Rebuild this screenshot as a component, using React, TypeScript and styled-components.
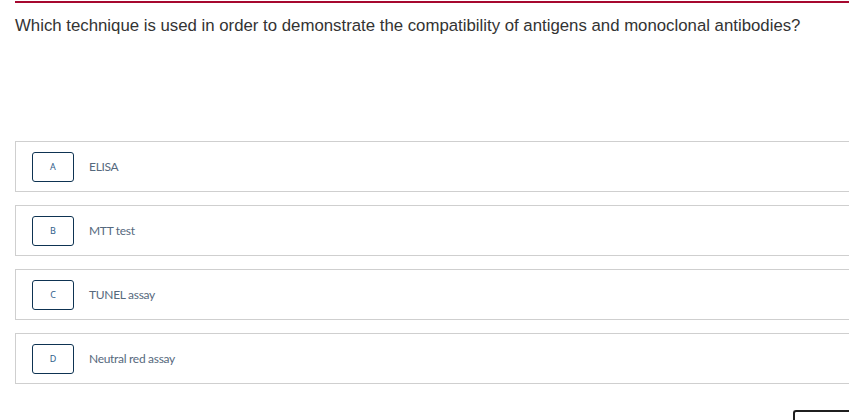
import React from "react"
import styled, { createGlobalStyle } from "styled-components"

const GlobalStyle = createGlobalStyle`
    html, body {
        margin: 0;
        padding: 0;
        background: #fff;
        overflow: hidden;
    }
`

const Page = styled.div`
    padding-left: 15px;
    width: 860px;
`

const TopRule = styled.div`
    height: 2px;
    margin-top: 1px;
    background: #a6082f;
`

const Question = styled.h1`
    margin: 13px 0 0 0;
    font-family: Arial, "Liberation Sans", sans-serif;
    font-size: 16.8px;
    font-weight: normal;
    line-height: 20px;
    color: #333;
`

const Options = styled.div`
    margin-top: 105px;
    display: flex;
    flex-direction: column;
    gap: 13px;
`

const OptionCard = styled.div`
    box-sizing: border-box;
    height: 51px;
    border: 1px solid #cfcfcf;
    border-right: none;
    display: flex;
    align-items: center;
    padding-left: 16px;
    gap: 15px;
    cursor: pointer;
`

const LetterBox = styled.div`
    box-sizing: border-box;
    width: 42px;
    height: 30px;
    border: 1.5px solid #0e3352;
    border-radius: 3px;
    display: flex;
    align-items: center;
    justify-content: center;
    font-family: "Noto Sans", sans-serif;
    font-size: 9px;
    color: #2f5d8a;
`

const Label = styled.span`
    font-family: Lato, "Noto Sans", sans-serif;
    font-size: 12px;
    letter-spacing: -0.3px;
    color: #56697d;
`

const Footer = styled.div`
    display: flex;
    justify-content: flex-end;
    margin-top: 26px;
`

const NextButton = styled.button`
    width: 82px;
    height: 34px;
    border: 2px solid #1f1f1f;
    border-right: none;
    border-radius: 3px 0 0 0;
    background: #fff;
`

const options = [
    { letter: "A", text: "ELISA" },
    { letter: "B", text: "MTT test" },
    { letter: "C", text: "TUNEL assay" },
    { letter: "D", text: "Neutral red assay" },
]

export default function App() {
    return (
        <Page>
            <GlobalStyle />
            <TopRule />
            <Question>
                Which technique is used in order to demonstrate the compatibility of antigens and monoclonal antibodies?
            </Question>
            <Options>
                {options.map((o) => (
                    <OptionCard key={o.letter}>
                        <LetterBox>{o.letter}</LetterBox>
                        <Label>{o.text}</Label>
                    </OptionCard>
                ))}
            </Options>
            <Footer>
                <NextButton aria-label="Next" />
            </Footer>
        </Page>
    )
}
